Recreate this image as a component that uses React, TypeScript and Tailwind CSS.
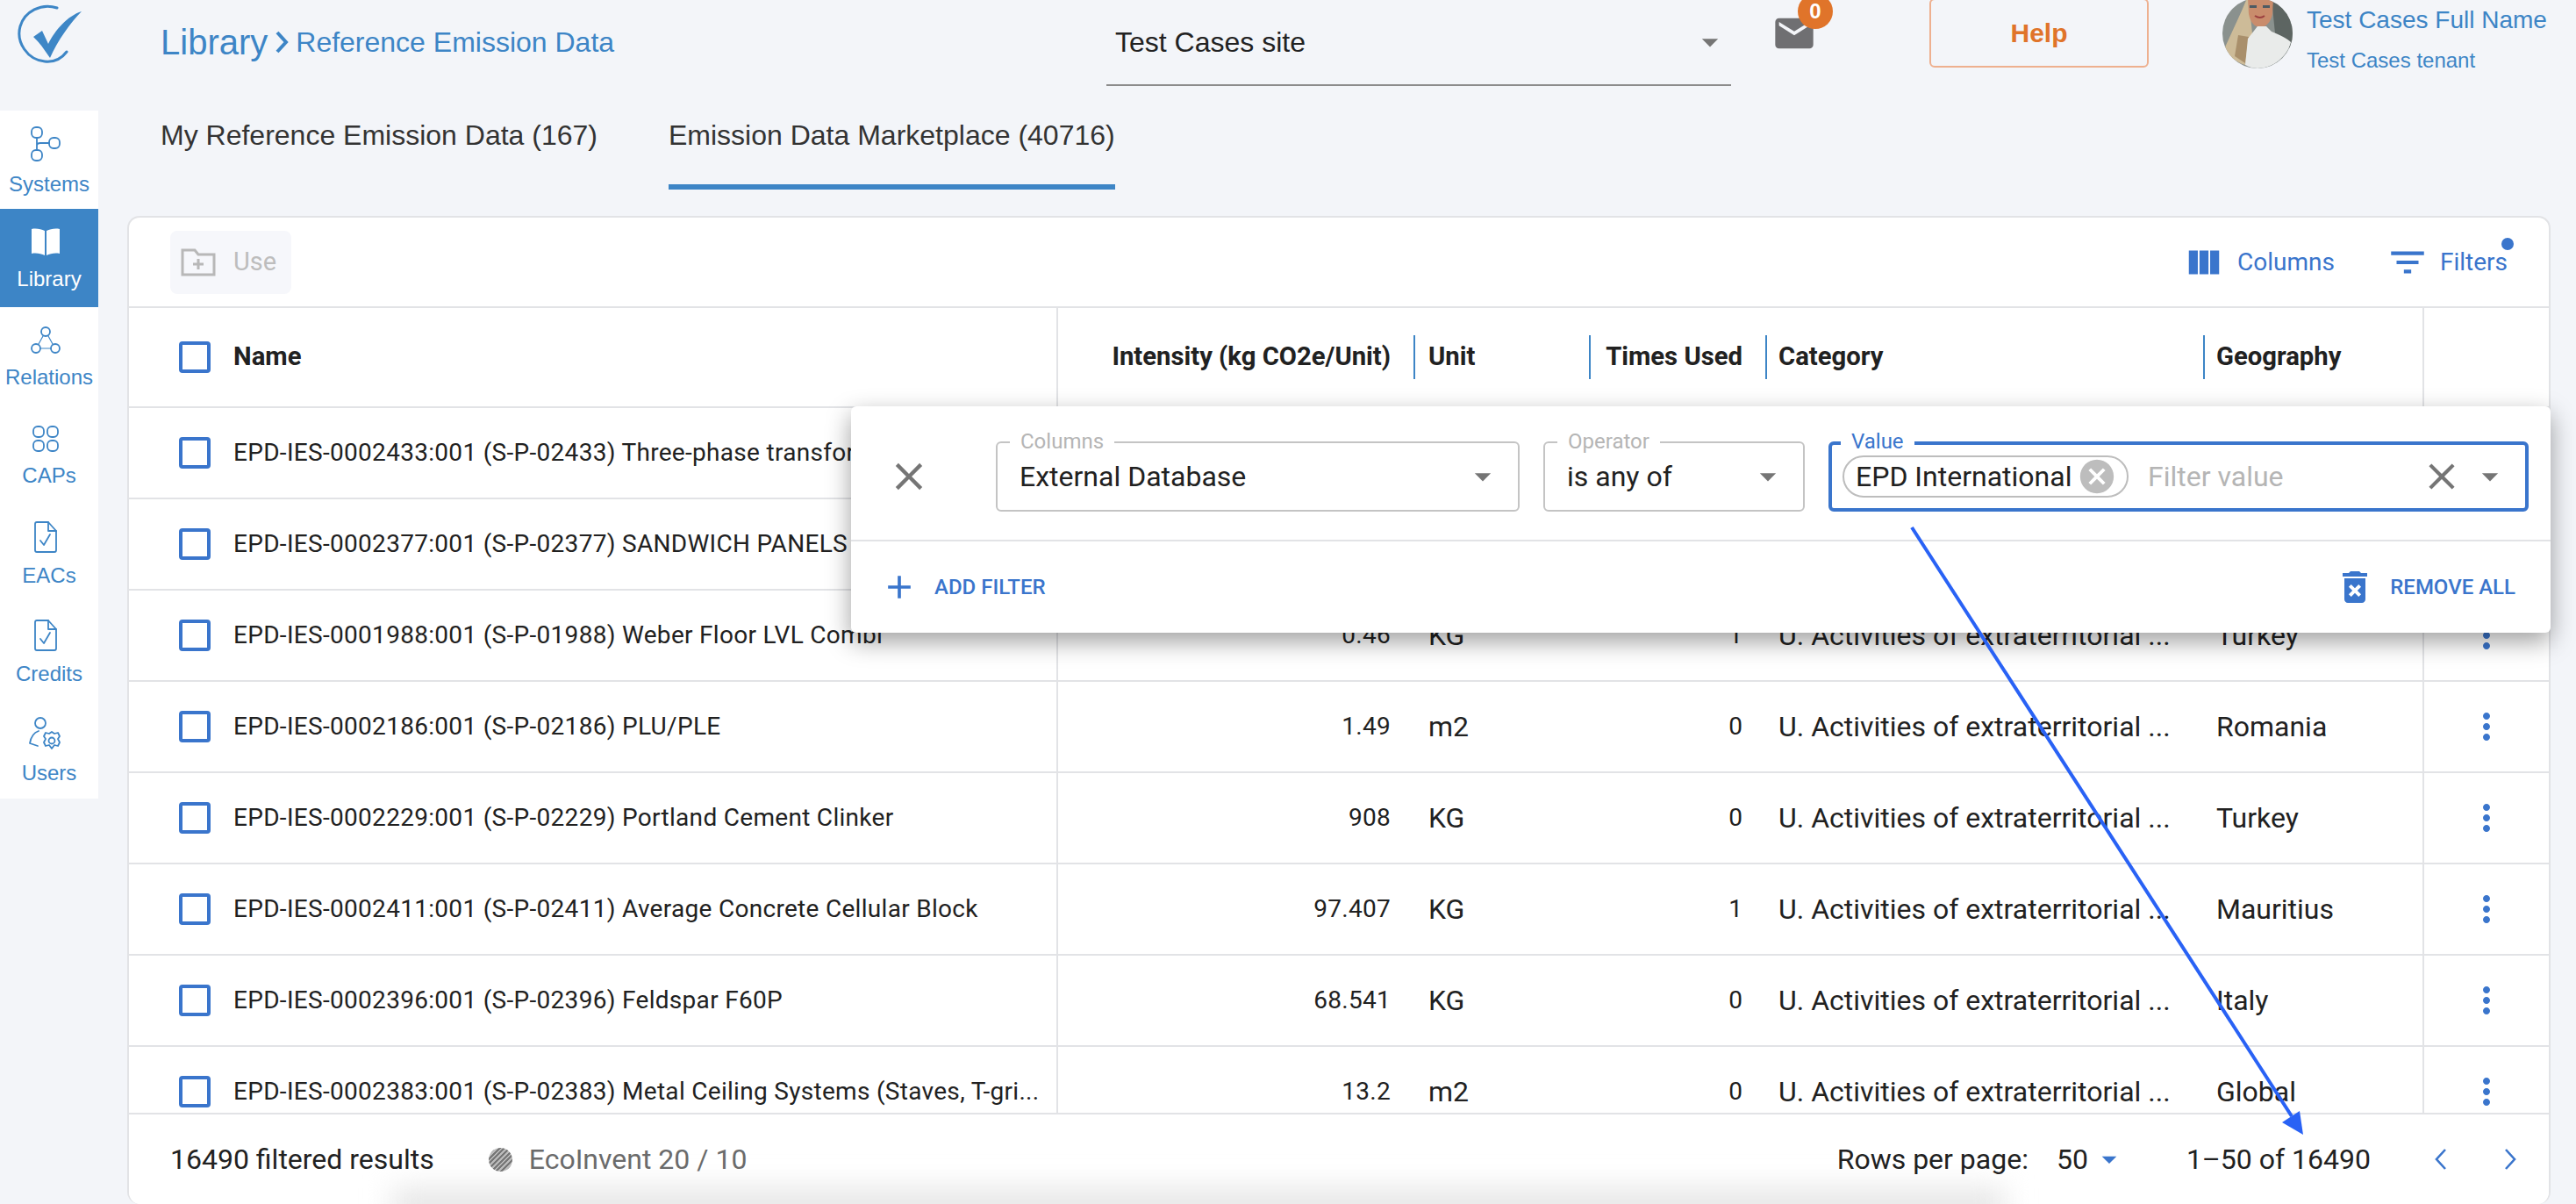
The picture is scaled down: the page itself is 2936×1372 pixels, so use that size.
import { FC, ReactNode } from "react";

const MUI = {
  viewColumn: "M14.67 5v14H9.33V5h5.34zm1 14H21V5h-5.33v14zm-7.34 0V5H3v14h5.33z",
  filter: "M10 18h4v-2h-4v2zM3 6v2h18V6H3zm3 7h12v-2H6v2z",
  mail: "M20 4H4c-1.1 0-1.99.9-1.99 2L2 18c0 1.1.9 2 2 2h16c1.1 0 2-.9 2-2V6c0-1.1-.9-2-2-2zm0 4l-8 5-8-5V6l8 5 8-5v2z",
  add: "M19 13h-6v6h-2v-6H5v-2h6V5h2v6h6v2z",
  deleteForever:
    "M6 19c0 1.1.9 2 2 2h8c1.1 0 2-.9 2-2V7H6v12zm2.46-7.12l1.41-1.41L12 12.59l2.12-2.12 1.41 1.41L13.41 14l2.12 2.12-1.41 1.41L12 15.41l-2.12 2.12-1.41-1.41L10.59 14l-2.13-2.12zM15.5 4l-1-1h-5l-1 1H5v2h14V4z",
  close:
    "M19 6.41L17.59 5 12 10.59 6.41 5 5 6.41 10.59 12 5 17.59 6.41 19 12 13.41 17.59 19 19 17.59 13.41 12z",
  cancel:
    "M12 2C6.47 2 2 6.47 2 12s4.47 10 10 10 10-4.47 10-10S17.53 2 12 2zm5 13.59L15.59 17 12 13.41 8.41 17 7 15.59 10.59 12 7 8.41 8.41 7 12 10.59 15.59 7 17 8.41 13.41 12 17 15.59z",
  more: "M12 8c1.1 0 2-.9 2-2s-.9-2-2-2-2 .9-2 2 .9 2 2 2zm0 2c-1.1 0-2 .9-2 2s.9 2 2 2 2-.9 2-2-.9-2-2-2zm0 6c-1.1 0-2 .9-2 2s.9 2 2 2 2-.9 2-2-.9-2-2-2z",
  drop: "M7 10l5 5 5-5z",
};

const Mui: FC<{ d: string; className: string }> = ({ d, className }) => (
  <svg viewBox="0 0 24 24" className={`shrink-0 ${className}`} fill="currentColor">
    <path d={d} />
  </svg>
);

const Logo = () => (
  <svg viewBox="0 0 76 70" className="h-[70px] w-[76px]" fill="none">
    <path
      d="M46 5 C28 -1 9 9 4 26 C-1 44 12 64 32 66 C42 67 51 63 57 55"
      stroke="#3d86c6"
      strokeWidth="3"
      strokeLinecap="round"
    />
    <path
      d="M19 38 L29 31 L36 46 C44 30 58 14 74 9 C61 22 47 42 38 62 C31 52 26 44 19 38 Z"
      fill="#3d86c6"
    />
  </svg>
);

const Avatar = () => (
  <svg viewBox="0 0 80 80" className="block h-[80px] w-[80px] rounded-full">
    <rect width="80" height="80" fill="#8a918e" />
    <path d="M56 0 H80 V60 L60 40 Z" fill="#5d6562" />
    <path d="M28 0 C20 20 10 40 2 58 L4 62 C10 68 18 74 26 76 L34 40 L30 0 Z" fill="#cdbb98" />
    <path d="M18 42 L14 66 L26 74 L30 44 Z" fill="#a98f6b" />
    <path d="M29 0 H58 L57 18 C55 28 49 33 43 33 C37 33 32 28 30 18 Z" fill="#c98c6c" />
    <path d="M26 76 L29 46 L40 32 L50 32 L56 38 C66 42 74 46 78 50 C74 66 58 80 40 80 C34 80 30 78 26 76 Z" fill="#e9ebea" />
    <path d="M37 20 Q43 24 48 20" stroke="#9c3f3f" strokeWidth="2" fill="none" />
    <rect x="31" y="8" width="8" height="3" fill="#4d5a63" />
    <rect x="46" y="8" width="8" height="3" fill="#4d5a63" />
  </svg>
);

const navStroke = {
  fill: "none",
  stroke: "currentColor",
  strokeWidth: 1.8,
  strokeLinecap: "round" as const,
  strokeLinejoin: "round" as const,
};

const navItems: { label: string; active?: boolean; icon: ReactNode }[] = [
  {
    label: "Systems",
    icon: (
      <svg viewBox="0 0 36 40" className="h-10 w-9" {...navStroke}>
        <rect x="2" y="1" width="12" height="12" rx="5" />
        <rect x="22" y="13" width="12" height="12" rx="5" />
        <rect x="2" y="27" width="12" height="12" rx="5" />
        <path d="M8 13 V27 M8 22 Q8 19 12 19 H22" />
      </svg>
    ),
  },
  {
    label: "Library",
    active: true,
    icon: (
      <svg viewBox="0 0 36 32" className="h-8 w-9" fill="currentColor">
        <path d="M2 1 C7 0 13 1 17 3 V31 C13 29 7 28 2 29 Z" />
        <path d="M34 1 C29 0 23 1 19 3 V31 C23 29 29 28 34 29 Z" />
      </svg>
    ),
  },
  {
    label: "Relations",
    icon: (
      <svg viewBox="0 0 36 32" className="h-8 w-9" {...navStroke}>
        <circle cx="18" cy="6" r="5" />
        <circle cx="7" cy="25" r="5" />
        <circle cx="29" cy="25" r="5" />
        <path d="M15 11 L10 20 M21 11 L26 20 M12 25 H24" strokeWidth="1.2" />
      </svg>
    ),
  },
  {
    label: "CAPs",
    icon: (
      <svg viewBox="0 0 36 32" className="h-8 w-9" {...navStroke}>
        <rect x="4" y="2" width="12" height="12" rx="5" />
        <rect x="20" y="2" width="12" height="12" rx="5" />
        <rect x="4" y="18" width="12" height="12" rx="5" />
        <rect x="20" y="18" width="12" height="12" rx="5" />
      </svg>
    ),
  },
  {
    label: "EACs",
    icon: (
      <svg viewBox="0 0 36 36" className="h-9 w-9" {...navStroke}>
        <path d="M6 3 Q6 1 8 1 H21 L30 11 V33 Q30 35 28 35 H8 Q6 35 6 33 Z" />
        <path d="M21 1 V11 H30 M12 22 L16 27 L23 15" />
      </svg>
    ),
  },
  {
    label: "Credits",
    icon: (
      <svg viewBox="0 0 36 36" className="h-9 w-9" {...navStroke}>
        <path d="M6 3 Q6 1 8 1 H21 L30 11 V33 Q30 35 28 35 H8 Q6 35 6 33 Z" />
        <path d="M21 1 V11 H30 M12 22 L16 27 L23 15" />
      </svg>
    ),
  },
  {
    label: "Users",
    icon: (
      <svg viewBox="0 0 40 38" className="h-[38px] w-10" {...navStroke}>
        <circle cx="14" cy="7" r="6" />
        <path d="M12 16 C6 18 3 24 2 30 L11 33" />
        <circle cx="27" cy="27" r="3.5" />
        <path d="M27 17 L30 19 L34 18 L36 22 L34 25 L36 29 L34 33 L30 32 L27 36 L24 32 L20 33 L18 29 L20 25 L18 22 L20 18 L24 19 Z" />
      </svg>
    ),
  },
];

const rows = [
  ["EPD-IES-0002433:001 (S-P-02433) Three-phase transformers", "", "", "", "", ""],
  ["EPD-IES-0002377:001 (S-P-02377) SANDWICH PANELS", "", "", "", "", ""],
  ["EPD-IES-0001988:001 (S-P-01988) Weber Floor LVL Combi", "0.46", "KG", "1", "U. Activities of extraterritorial ...", "Turkey"],
  ["EPD-IES-0002186:001 (S-P-02186) PLU/PLE", "1.49", "m2", "0", "U. Activities of extraterritorial ...", "Romania"],
  ["EPD-IES-0002229:001 (S-P-02229) Portland Cement Clinker", "908", "KG", "0", "U. Activities of extraterritorial ...", "Turkey"],
  ["EPD-IES-0002411:001 (S-P-02411) Average Concrete Cellular Block", "97.407", "KG", "1", "U. Activities of extraterritorial ...", "Mauritius"],
  ["EPD-IES-0002396:001 (S-P-02396) Feldspar F60P", "68.541", "KG", "0", "U. Activities of extraterritorial ...", "Italy"],
  ["EPD-IES-0002383:001 (S-P-02383) Metal Ceiling Systems (Staves, T-gri...", "13.2", "m2", "0", "U. Activities of extraterritorial ...", "Global"],
];

const Checkbox = () => (
  <span className="block h-9 w-9 shrink-0 rounded-[4px] border-4 border-[#3a75cc]" />
);

const HeaderCell: FC<{ children: ReactNode; className: string }> = ({ children, className }) => (
  <div className="flex h-full items-center">
    <div className={`flex h-[50px] items-center border-l-2 border-[#3d85c6] ${className}`}>{children}</div>
  </div>
);

const Outlined: FC<{ label: string; active?: boolean; className: string; children: ReactNode }> = ({
  label,
  active,
  className,
  children,
}) => (
  <div
    className={`relative flex h-[80px] shrink-0 items-center rounded-[6px] ${
      active ? "border-4 border-[#3a75cc]" : "border-2 border-[#c4c4c4]"
    } ${className}`}
  >
    <span
      className={`absolute bg-white px-[12px] text-[24px] leading-[26px] ${
        active ? "-top-[17px] left-[10px] text-[#3a75cc]" : "-top-[15px] left-[14px] text-[#b5b5b5]"
      }`}
    >
      {label}
    </span>
    {children}
  </div>
);

export default function App() {
  return (
    <div className="relative flex h-[1372px] w-[2936px] overflow-hidden bg-[#f3f5f9] font-['Liberation_Sans',sans-serif]">
      {/* Left rail */}
      <aside className="flex w-[112px] shrink-0 flex-col">
        <div className="flex h-[126px] justify-center pt-[4px] pl-[2px]">
          <Logo />
        </div>
        <nav className="bg-white">
          {navItems.map((item) => (
            <div
              key={item.label}
              className={`flex h-[112px] flex-col items-center justify-center gap-[12px] pt-[4px] text-[24px] leading-[28px] ${
                item.active ? "bg-[#3d85c6] text-white" : "text-[#3d85c6]"
              }`}
            >
              <span className="mr-[8px]">{item.icon}</span>
              <span>{item.label}</span>
            </div>
          ))}
        </nav>
      </aside>

      <main className="flex min-w-0 flex-1 flex-col pr-[29px] pl-[33px]">
        {/* Top bar */}
        <header className="flex h-[126px] shrink-0 pl-[38px]">
          <div className="flex h-[96px] w-[1078px] shrink-0 items-center text-[#3d85c6]">
            <span className="text-[40px]">Library</span>
            <svg viewBox="0 0 16 26" className="mr-[8px] ml-[8px] h-[26px] w-4" fill="none" stroke="currentColor" strokeWidth="4">
              <path d="M3 2 L13 13 L3 24" />
            </svg>
            <span className="text-[32px]">Reference Emission Data</span>
          </div>
          <div className="flex h-[98px] w-[712px] shrink-0 items-center justify-between border-b-2 border-[#8c8c8c] pr-[2px] pl-[10px] text-[32px] text-[#222]">
            <span>Test Cases site</span>
            <Mui d={MUI.drop} className="h-[44px] w-[44px] text-[#757575]" />
          </div>
          <div className="relative ml-[46px] h-[96px] w-[46px] shrink-0 pt-[12px]">
            <Mui d={MUI.mail} className="h-[52px] w-[52px] text-[#6f6f72]" />
            <span className="absolute -top-[7px] left-[30px] flex h-10 w-10 items-center justify-center rounded-full bg-[#e0742a] text-[24px] font-bold text-white">
              0
            </span>
          </div>
          <div className="-mt-[2px] ml-[134px] flex h-[79px] w-[250px] shrink-0 items-center justify-center rounded-[6px] border-2 border-[#eeb08f] text-[30px] font-bold text-[#e0742a]">
            Help
          </div>
          <div className="-mt-[2px] ml-[84px] shrink-0">
            <Avatar />
          </div>
          <div className="ml-[16px] shrink-0 whitespace-nowrap text-[#3d85c6]">
            <div className="mt-[6px] text-[28px] leading-[34px]">Test Cases Full Name</div>
            <div className="mt-[15px] text-[24px] leading-[28px]">Test Cases tenant</div>
          </div>
        </header>

        {/* Tabs */}
        <div className="flex h-[120px] shrink-0 pl-[38px] text-[32px] text-[#333]">
          <div className="flex h-[90px] w-[579px] items-start pt-[4px]">My Reference Emission Data (167)</div>
          <div className="h-[90px] w-[509px] border-b-[6px] border-[#3d85c6] pt-[4px] whitespace-nowrap">
            Emission Data Marketplace (40716)
          </div>
        </div>

        {/* Card */}
        <section className="relative flex min-h-0 flex-1 flex-col rounded-[14px] border-x-2 border-t-2 border-[#e2e3e6] bg-white">
          <div className="flex h-[103px] shrink-0 items-center justify-between border-b-2 border-[#e2e3e6] pr-[47px] pl-[47px] font-['Roboto',sans-serif]">
            <div className="flex h-[72px] w-[138px] items-center gap-[20px] rounded-[8px] bg-[#f6f7fb] pl-[12px] text-[29px] text-[#bdbdbd]">
              <svg viewBox="0 0 40 32" className="h-8 w-10" fill="none" stroke="#b8b8b8" strokeWidth="3">
                <path d="M2 2 H16 L20 7 H38 V30 H2 Z" />
                <path d="M20 12 V24 M14 18 H26" />
              </svg>
              Use
            </div>
            <div className="relative flex items-center text-[28px] text-[#3a75cc]">
              <Mui d={MUI.viewColumn} className="h-[46px] w-[46px]" />
              <span className="ml-[15px]">Columns</span>
              <Mui d={MUI.filter} className="ml-[58px] h-[50px] w-[50px]" />
              <span className="ml-[12px]">Filters</span>
              <span className="absolute -top-[3px] -right-[7px] h-[14px] w-[14px] rounded-full bg-[#3a75cc]" />
            </div>
          </div>

          {/* Table */}
          <div className="min-h-0 flex-1 overflow-hidden font-['Roboto',sans-serif] text-[32px] text-[#212121]">
            <div className="grid h-[114px] grid-cols-[1059px_405px_200px_201px_499px_250px_1fr] border-b-2 border-[#e2e3e6] text-[29.25px] font-bold">
              <div className="flex items-center gap-[26px] border-r-2 border-[#e2e3e6] pl-[57px]">
                <Checkbox />
                Name
              </div>
              <div className="flex items-center justify-end pr-[26px] whitespace-nowrap">Intensity (kg CO2e/Unit)</div>
              <HeaderCell className="pl-[15px]">Unit</HeaderCell>
              <div className="flex h-full items-center">
                <div className="flex h-[50px] w-full items-center justify-end border-l-2 border-[#3d85c6] pr-[26px]">
                  Times Used
                </div>
              </div>
              <HeaderCell className="pl-[13px]">Category</HeaderCell>
              <HeaderCell className="pl-[13px]">Geography</HeaderCell>
              <div className="border-l-2 border-[#e2e3e6]" />
            </div>
            {rows.map((r) => (
              <div
                key={r[0]}
                className="grid h-[104px] grid-cols-[1059px_405px_200px_201px_499px_250px_1fr] border-b-2 border-[#e2e3e6]"
              >
                <div className="flex items-center gap-[26px] border-r-2 border-[#e2e3e6] pl-[57px] text-[28px] tracking-[0.3px] whitespace-nowrap">
                  <Checkbox />
                  {r[0]}
                </div>
                <div className="flex items-center justify-end pr-[26px] text-[28px] tracking-[0.3px]">{r[1]}</div>
                <div className="flex items-center pl-[17px]">{r[2]}</div>
                <div className="flex items-center justify-end pr-[26px] text-[28px]">{r[3]}</div>
                <div className="flex items-center pl-[15px] whitespace-nowrap">{r[4]}</div>
                <div className="flex items-center pl-[15px]">{r[5]}</div>
                <div className="flex items-center justify-center border-l-2 border-[#e2e3e6]">
                  <Mui d={MUI.more} className="h-[48px] w-[48px] text-[#3a75cc]" />
                </div>
              </div>
            ))}
          </div>

          {/* Footer */}
          <div className="absolute right-0 bottom-0 left-0 flex h-[104px] items-center overflow-hidden rounded-b-[14px] border-t-2 border-[#e2e3e6] bg-white pl-[47px] font-['Roboto',sans-serif] text-[32px] text-[#212121]">
            <span className="absolute right-[620px] -bottom-[22px] left-[300px] h-[40px] bg-[#e6e6e6] blur-[16px]" />
            <span className="relative">16490 filtered results</span>
            <span className="relative ml-[62px] h-[27px] w-[27px] rounded-full bg-[repeating-linear-gradient(135deg,#777_0,#777_2px,#bbb_2px,#bbb_4px)]" />
            <span className="relative ml-[19px] text-[#6b6b6b]">EcoInvent 20 / 10</span>
            <span className="relative ml-auto">Rows per page:</span>
            <span className="relative ml-[32px]">50</span>
            <Mui d={MUI.drop} className="relative ml-[4px] h-[40px] w-[40px] text-[#3a75cc]" />
            <span className="relative ml-[68px]">1–50 of 16490</span>
            <svg viewBox="0 0 16 26" className="relative ml-[72px] h-[26px] w-4" fill="none" stroke="#3a75cc" strokeWidth="2.6">
              <path d="M13 2 L3 13 L13 24" />
            </svg>
            <svg viewBox="0 0 16 26" className="relative mr-[36px] ml-[63px] h-[26px] w-4" fill="none" stroke="#3a75cc" strokeWidth="2.6">
              <path d="M3 2 L13 13 L3 24" />
            </svg>
          </div>

          {/* Filter panel */}
          <div className="absolute top-[215px] right-[-2px] left-[823px] rounded-[6px] bg-white font-['Roboto',sans-serif] shadow-[0_10px_28px_rgba(0,0,0,0.38)]">
            <div className="flex h-[154px] items-center border-b-2 border-[#e2e3e6] pt-[8px]">
              <Mui d={MUI.close} className="ml-[40px] h-[52px] w-[52px] text-[#757575]" />
              <Outlined label="Columns" className="ml-[73px] w-[597px] pr-[18px] pl-[25px]">
                <span className="flex-1 text-[32px] text-[#212121]">External Database</span>
                <Mui d={MUI.drop} className="h-[44px] w-[44px] text-[#757575]" />
              </Outlined>
              <Outlined label="Operator" className="ml-[27px] w-[298px] pr-[18px] pl-[25px]">
                <span className="flex-1 text-[32px] text-[#212121]">is any of</span>
                <Mui d={MUI.drop} className="h-[44px] w-[44px] text-[#757575]" />
              </Outlined>
              <Outlined label="Value" active className="ml-[27px] w-[798px] pr-[18px] pl-[12px]">
                <span className="flex h-[48px] w-[326px] shrink-0 items-center rounded-full border-2 border-[#bdbdbd] pl-[13px] text-[32px] whitespace-nowrap text-[#212121]">
                  EPD International
                  <Mui d={MUI.cancel} className="ml-[6px] h-[46px] w-[46px] text-[#bdbdbd]" />
                </span>
                <span className="ml-[22px] flex-1 text-[32px] text-[#b5b5b5]">Filter value</span>
                <Mui d={MUI.close} className="h-[50px] w-[50px] text-[#757575]" />
                <Mui d={MUI.drop} className="ml-[8px] h-[44px] w-[44px] text-[#757575]" />
              </Outlined>
            </div>
            <div className="flex h-[104px] items-center justify-between pr-[40px] pl-[33px] text-[24px] font-medium text-[#3a75cc]">
              <div className="flex items-center gap-[18px]">
                <Mui d={MUI.add} className="h-[44px] w-[44px]" />
                ADD FILTER
              </div>
              <div className="flex items-center gap-[16px]">
                <Mui d={MUI.deleteForever} className="h-[48px] w-[48px]" />
                REMOVE ALL
              </div>
            </div>
          </div>
        </section>
      </main>

      {/* Annotation arrow over the page */}
      <svg viewBox="0 0 2936 1372" className="pointer-events-none absolute top-0 left-0 h-[1372px] w-[2936px]" fill="none">
        <path d="M2179 601 L2612 1272" stroke="#2962f5" strokeWidth="4" />
        <path d="M2625 1293 L2601 1279 L2621 1266 Z" fill="#2962f5" />
      </svg>
    </div>
  );
}
